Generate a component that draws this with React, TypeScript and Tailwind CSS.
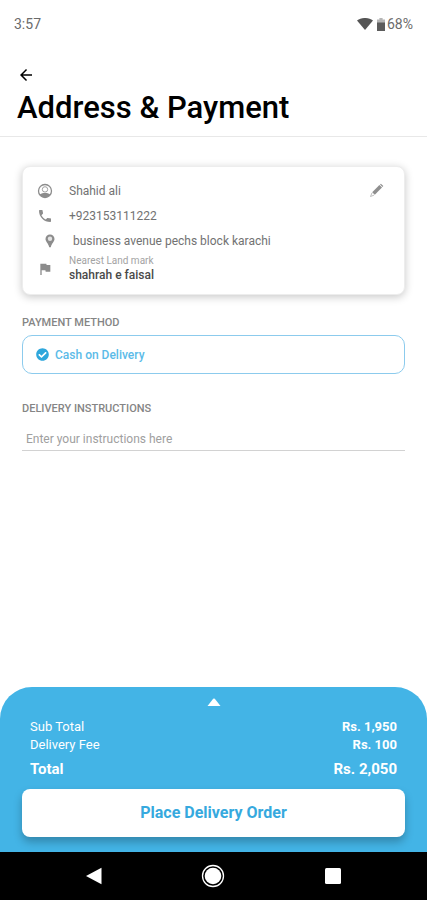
import { useState } from 'react';
import { MdArrowBack, MdFlag, MdPhone } from 'react-icons/md';
import { FaCheckCircle } from 'react-icons/fa';

const totals = [
    { label: 'Sub Total', value: 'Rs. 1,950' },
    { label: 'Delivery Fee', value: 'Rs. 100' },
];

function StatusBar() {
    return (
        <div className="flex items-center justify-between px-3.5 pt-4 text-sm leading-4 text-[#6b6b6b]">
            <span>3:57</span>
            <div className="flex items-center">
                <svg width="16" height="12" viewBox="0 0 16 12" fill="#555555">
                    <path d="M0 2.6C4.6-.9 11.4-.9 16 2.6L8 12z" />
                </svg>
                <svg className="mr-0.5 ml-1" width="8" height="13" viewBox="0 0 8 13">
                    <path d="M2.4 0h3.2v1.4H8V5H0V1.4h2.4z" fill="#b5b5b5" />
                    <path d="M0 4.5h8V13H0z" fill="#5c5c5c" />
                </svg>
                <span>68%</span>
            </div>
        </div>
    );
}

function UserIcon() {
    return (
        <svg width="16" height="16" viewBox="0 0 16 16">
            <circle cx="8" cy="8" r="6.5" fill="none" stroke="#8c8c8c" strokeWidth="1.3" />
            <circle cx="8" cy="6.4" r="2.7" fill="none" stroke="#a0a0a0" strokeWidth="1" />
            <path d="M2.8 11.2C4.5 10.2 6 9.9 8 9.9s3.5.3 5.2 1.3C12 13.3 10.2 14.4 8 14.4s-4-1.1-5.2-3.200z" fill="#8c8c8c" />
        </svg>
    );
}

function PinIcon() {
    return (
        <svg width="10" height="14" viewBox="0 0 10 14">
            <path d="M5 .5A4.5 4.5 0 0 0 .5 5C.5 7.6 3.4 9.4 4.2 13.2h1.6C6.6 9.4 9.5 7.6 9.5 5A4.5 4.5 0 0 0 5 .5z" fill="#8c8c8c" />
            <circle cx="5" cy="4.8" r="2.2" fill="#e2e2e2" />
        </svg>
    );
}

function PencilIcon() {
    return (
        <svg width="15" height="15" viewBox="0 0 15 15">
            <path d="M3.2 9.2L10.4 2l2.600 2.600-7.200 7.200z" fill="#8f8f8f" />
            <path d="M11 1.500l.9-.8 2.400 2.400-.8.9z" fill="#8f8f8f" />
            <path d="M3 9.900L1.500 13.500l3.600-1.400" fill="none" stroke="#b5b5b5" strokeWidth=".9" />
        </svg>
    );
}

function AddressCard() {
    return (
        <section className="rounded-lg border border-[#ededed] bg-white px-3.5 pt-[11px] pb-[11px] text-xs text-[#727272] shadow-[0_2px_8px_rgba(0,0,0,0.22)]">
            <div className="flex h-[25px] items-center">
                <UserIcon />
                <span className="ml-4 flex-1">Shahid ali</span>
                <button type="button" aria-label="Edit address" className="mr-1.5">
                    <PencilIcon />
                </button>
            </div>
            <div className="flex h-[25px] items-center">
                <MdPhone className="size-4 text-[#8c8c8c]" />
                <span className="ml-4">+923153111222</span>
            </div>
            <div className="flex h-[25px] items-center pl-2">
                <PinIcon />
                <span className="ml-[18px]">business avenue pechs block karachi</span>
            </div>
            <div className="flex items-center pt-0.5">
                <MdFlag className="size-4 text-[#8c8c8c]" />
                <div className="ml-4">
                    <p className="text-[10px] leading-3 text-[#a3a3a3]">Nearest Land mark</p>
                    <p className="leading-4 font-medium text-[#4a4a4a]">shahrah e faisal</p>
                </div>
            </div>
        </section>
    );
}

function Summary() {
    return (
        <footer className="rounded-t-[32px] bg-[#43b4e6] px-[22px] pt-[11px] pb-[15px] text-white">
            <button type="button" aria-label="Show order details" className="mx-auto block">
                <svg width="14" height="8" viewBox="0 0 14 8" fill="#fff">
                    <path d="M6.2.8Q7 0 7.8.8L13.5 8H.5z" />
                </svg>
            </button>
            <dl className="px-2 pt-3 text-[13px] leading-[18px]">
                {totals.map((row) => (
                    <div key={row.label} className="flex justify-between">
                        <dt>{row.label}</dt>
                        <dd className="font-bold">{row.value}</dd>
                    </div>
                ))}
                <div className="flex justify-between pt-[3px] pb-2 text-[15px] leading-6 font-bold">
                    <dt>Total</dt>
                    <dd>Rs. 2,050</dd>
                </div>
            </dl>
            <button
                type="button"
                className="h-12 w-full rounded-lg bg-white text-base font-bold text-[#36a9de] shadow-[0_5px_8px_rgba(0,0,0,0.25)]"
            >
                Place Delivery Order
            </button>
        </footer>
    );
}

function NavBar() {
    return (
        <nav className="flex h-12 items-center justify-around bg-black px-9">
            <button type="button" aria-label="Back">
                <svg width="18" height="18" viewBox="0 0 18 18" fill="#fff">
                    <path d="M16.5.8v16.4L1 9z" />
                </svg>
            </button>
            <button type="button" aria-label="Home">
                <svg width="24" height="24" viewBox="0 0 24 24">
                    <circle cx="12" cy="12" r="10.5" fill="none" stroke="#fff" strokeWidth="1.3" />
                    <circle cx="12" cy="12" r="8.3" fill="#fff" />
                </svg>
            </button>
            <button type="button" aria-label="Recent apps">
                <svg width="18" height="18" viewBox="0 0 18 18" fill="#fff">
                    <rect x="1" y="1" width="16" height="16" rx="1.5" />
                </svg>
            </button>
        </nav>
    );
}

export default function App() {
    const [instructions, setInstructions] = useState('');
    const [method, setMethod] = useState('cash');

    return (
        <div className="flex min-h-screen flex-col bg-white font-['Roboto',sans-serif]">
            <StatusBar />
            <header className="border-b border-[#e8e8e8] px-[17px] pt-[34px] pb-2.5">
                <button type="button" aria-label="Go back" className="block">
                    <MdArrowBack className="size-[18px]" />
                </button>
                <h1 className="pt-1.5 text-[31px] leading-9 font-medium text-black">Address & Payment</h1>
            </header>

            <main className="flex-1 px-[22px] pt-[29px]">
                <AddressCard />

                <fieldset className="pt-5">
                    <legend className="float-left w-full text-[11px] leading-4 font-medium text-[#858585]">PAYMENT METHOD</legend>
                    <div className="clear-both pt-1">
                        <label className="flex h-[39px] items-center gap-1.5 rounded-[10px] border border-[#8ccbed] px-3 text-xs font-medium text-[#5bbbe8]">
                            <span className="grid size-3.5 place-items-center">
                                <input
                                    type="radio"
                                    name="method"
                                    checked={method === 'cash'}
                                    onChange={() => setMethod('cash')}
                                    className="col-start-1 row-start-1 size-3 appearance-none rounded-full"
                                />
                                <FaCheckCircle className="pointer-events-none col-start-1 row-start-1 size-[13px] text-[#2fa7dc]" />
                            </span>
                            Cash on Delivery
                        </label>
                    </div>
                </fieldset>

                <div className="pt-[27px]">
                    <label htmlFor="instructions" className="block text-[11px] leading-4 font-medium text-[#858585]">
                        DELIVERY INSTRUCTIONS
                    </label>
                    <input
                        id="instructions"
                        type="text"
                        placeholder="Enter your instructions here"
                        value={instructions}
                        onChange={(e) => setInstructions(e.target.value)}
                        className="mt-2.5 h-6 w-full border-b border-[#d2d2d2] px-1 text-xs text-[#555555] outline-none placeholder:text-[#a0a0a0]"
                    />
                </div>
            </main>

            <Summary />
            <NavBar />
        </div>
    );
}
